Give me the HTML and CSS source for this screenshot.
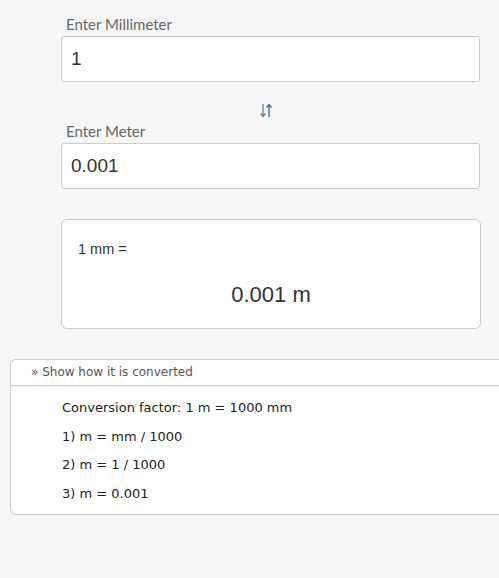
FILE: index.html
```html
<!DOCTYPE html>
<html>
<head>
<meta charset="utf-8">
<link rel="stylesheet" href="styles.css">
</head>
<body>
<div class="conv">
  <label class="lbl lbl-first">Enter Millimeter</label>
  <div class="inp">1</div>
  <div class="swap">
    <svg width="12" height="15" viewBox="0 0 12 15">
      <path d="M3 1 V13 M0.5 10.5 L3 13.5 L5.5 10.5" fill="none" stroke="#6b7f99" stroke-width="1.3"/>
      <path d="M9 14 V2 M6.5 4.5 L9 1.5 L11.5 4.5" fill="none" stroke="#2a6db0" stroke-width="1.3"/>
    </svg>
  </div>
  <label class="lbl">Enter Meter</label>
  <div class="inp">0.001</div>
  <div class="result">
    <div class="res-from">1 mm =</div>
    <div class="res-to">0.001 m</div>
  </div>
</div>
<div class="how">
  <div class="how-head">» Show how it is converted</div>
  <div class="how-body">
    <p>Conversion factor: 1 m = 1000 mm</p>
    <p>1) m = mm / 1000</p>
    <p>2) m = 1 / 1000</p>
    <p>3) m = 0.001</p>
  </div>
</div>
</body>
</html>
```
FILE: styles.css
```css
html, body {
  margin: 0;
  padding: 0;
  background: #f7f7f7;
}
body {
  font-family: "Liberation Sans", Arial, sans-serif;
  color: #333;
}
.conv {
  margin-left: 61px;
  width: 419px;
  padding-top: 14px;
}
.lbl {
  display: block;
  font-family: Lato, "Open Sans", sans-serif;
  font-size: 15px;
  color: #666;
  line-height: 20px;
  margin: 0 0 2px 5px;
}
.inp {
  box-sizing: border-box;
  height: 46px;
  background: #fff;
  border: 1px solid #ccc;
  border-radius: 3px;
  font-size: 19px;
  line-height: 44px;
  padding-left: 9px;
  color: #333;
}
.swap {
  display: flex;
  justify-content: center;
  padding: 21px 0 3px 0;
  height: 15px;
}
.swap svg {
  margin-left: -10px;
  display: block;
}
.result {
  box-sizing: border-box;
  margin-top: 30px;
  width: 420px;
  height: 110px;
  background: #fff;
  border: 1px solid #ccc;
  border-radius: 6px;
  padding: 20px 16px 0 16px;
}
.res-from {
  font-size: 14.5px;
  line-height: 18px;
}
.res-to {
  margin-top: 25px;
  text-align: center;
  font-size: 22px;
  line-height: 24px;
}
.how {
  margin: 30px 0 0 10px;
  font-family: "DejaVu Sans", Verdana, sans-serif;
}
.how-head {
  box-sizing: border-box;
  height: 27px;
  border: 1px solid #ccc;
  border-right: none;
  border-radius: 6px 0 0 0;
  background: #fff;
  font-size: 12px;
  color: #555;
  line-height: 25px;
  padding-left: 20px;
}
.how-body {
  box-sizing: border-box;
  margin-top: 1px;
  height: 128px;
  border: 1px solid #ccc;
  border-top: none;
  border-right: none;
  border-radius: 0 0 0 6px;
  background: #fff;
  padding: 12px 0 0 51px;
  font-size: 13px;
  color: #222;
}
.how-body p {
  margin: 0 0 11px 0;
  line-height: 17.5px;
}
```
